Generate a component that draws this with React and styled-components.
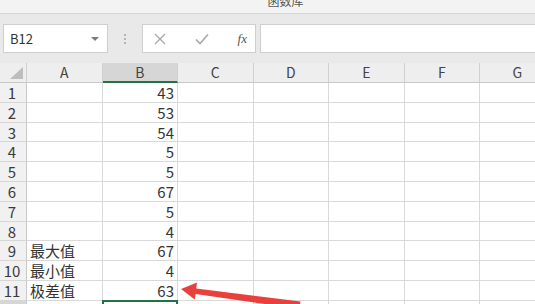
import React from "react";
import styled, { createGlobalStyle } from "styled-components";

const GlobalStyle = createGlobalStyle`
  html, body {
    margin: 0;
    padding: 0;
    background: #ffffff;
    overflow: hidden;
  }
  body {
    font-family: "Noto Sans CJK SC", "Noto Sans", sans-serif;
  }
`;

const Window = styled.div`
  position: relative;
  width: 535px;
  height: 304px;
  overflow: hidden;
  background: #ffffff;
`;

const TitleBar = styled.div`
  height: 13px;
  background: #f3f3f3;
  border-bottom: 1px solid #d6d6d6;
  overflow: hidden;
  display: flex;
  justify-content: center;
`;

const Title = styled.span`
  margin-top: -6px;
  padding-left: 36px;
  font-size: 12px;
  line-height: 14px;
  color: #555;
`;

const FormulaBar = styled.div`
  height: 49px;
  box-sizing: border-box;
  padding: 10px 0 0 3px;
  background: #e9e9e9;
  display: flex;
  align-items: flex-start;
`;

const Box = styled.div`
  box-sizing: border-box;
  height: 29px;
  background: #ffffff;
  border: 1px solid #cfcfcf;
  display: flex;
  align-items: center;
`;

const NameBox = styled(Box)`
  width: 105px;
  padding: 0 8px 0 6px;
  justify-content: space-between;
  font-size: 13px;
  color: #333;
`;

const Caret = styled.span`
  width: 0;
  height: 0;
  border-left: 4px solid transparent;
  border-right: 4px solid transparent;
  border-top: 4px solid #7a7a7a;
`;

const Grip = styled.div`
  width: 34px;
  height: 29px;
  display: flex;
  flex-direction: column;
  align-items: center;
  justify-content: center;
  gap: 2px;
  span {
    width: 2px;
    height: 2px;
    background: #b5b5b5;
  }
`;

const FnBox = styled(Box)`
  width: 114px;
  padding: 0 6px 0 11px;
  justify-content: space-between;
`;

const Fx = styled.span`
  font-family: "Liberation Serif", serif;
  font-style: italic;
  font-size: 13px;
  color: #555;
  padding-right: 2px;
`;

const FormulaInput = styled(Box)`
  flex: 1;
  margin-left: 4px;
  border-right: none;
`;

const Sheet = styled.div`
  display: grid;
  grid-template-columns: 27px repeat(7, 75.5px);
  grid-template-rows: 20px;
  grid-auto-rows: 19.8px;
  font-size: 15px;
  color: #333;
`;

const Cell = styled.div`
  box-sizing: border-box;
  border-right: 1px solid #d9d9d9;
  border-bottom: 1px solid #d9d9d9;
  padding: 0 3px;
  line-height: 19px;
  white-space: nowrap;
  overflow: hidden;
  text-align: ${(p) => (p.$num ? "right" : "left")};
`;

const ColHead = styled(Cell)`
  background: ${(p) => (p.$active ? "#d6d6d6" : "#eeeeee")};
  border-right-color: #d0d0d0;
  border-bottom: ${(p) => (p.$active ? "2px solid #217346" : "1px solid #c8c8c8")};
  text-align: center;
  color: #444;
  font-size: 14px;
  line-height: 19px;
`;

const Corner = styled(Cell)`
  position: relative;
  background: #eeeeee;
  border-right-color: #d0d0d0;
  border-bottom-color: #c8c8c8;
  &::after {
    content: "";
    position: absolute;
    right: 3px;
    bottom: 3px;
    border-left: 13px solid transparent;
    border-bottom: 12px solid #bdbdbd;
  }
`;

const RowHead = styled(Cell)`
  background: ${(p) => (p.$active ? "#d6d6d6" : "#f1f1f1")};
  border-right-color: #c8c8c8;
  border-bottom-color: #d6d6d6;
  text-align: center;
  padding: 0 2px 0 0;
  color: #3a3a3a;
`;

const Selected = styled(Cell)`
  border: 2px solid #217346;
  margin: -1px 0 0 -1px;
`;

const Arrow = styled.svg`
  position: absolute;
  left: 0;
  top: 0;
  pointer-events: none;
`;

const cols = ["A", "B", "C", "D", "E", "F", "G"];
const rows = [
  ["", "43"],
  ["", "53"],
  ["", "54"],
  ["", "5"],
  ["", "5"],
  ["", "67"],
  ["", "5"],
  ["", "4"],
  ["最大值", "67"],
  ["最小值", "4"],
  ["极差值", "63"],
];

export default function App() {
  return (
    <>
      <GlobalStyle />
      <Window>
        <TitleBar>
          <Title>函数库</Title>
        </TitleBar>
        <FormulaBar>
          <NameBox>
            B12
            <Caret />
          </NameBox>
          <Grip>
            <span />
            <span />
            <span />
          </Grip>
          <FnBox>
            <svg width="12" height="12" viewBox="0 0 12 12">
              <path d="M1 1L11 11M11 1L1 11" stroke="#a8a8a8" strokeWidth="1.3" />
            </svg>
            <svg width="14" height="12" viewBox="0 0 14 12">
              <path d="M1 6.5L5 10.5L13 1.5" stroke="#a8a8a8" strokeWidth="1.6" fill="none" />
            </svg>
            <Fx>fx</Fx>
          </FnBox>
          <FormulaInput />
        </FormulaBar>
        <Sheet>
          <Corner />
          {cols.map((c) => (
            <ColHead key={c} $active={c === "B"}>
              {c}
            </ColHead>
          ))}
          {rows.map(([a, b], i) => (
            <React.Fragment key={i}>
              <RowHead>{i + 1}</RowHead>
              <Cell>{a}</Cell>
              <Cell $num>{b}</Cell>
              {cols.slice(2).map((c) => (
                <Cell key={c} />
              ))}
            </React.Fragment>
          ))}
          <RowHead $active />
          <Cell />
          <Selected />
          {cols.slice(2).map((c) => (
            <Cell key={c} />
          ))}
        </Sheet>
        <Arrow width="535" height="304" viewBox="0 0 535 304">
          <polygon
            points="181,289 197,282.5 196.2,288.5 300.5,301.5 299.5,309 195.6,294 194.8,299.5"
            fill="#e8403c"
          />
        </Arrow>
      </Window>
    </>
  );
}
